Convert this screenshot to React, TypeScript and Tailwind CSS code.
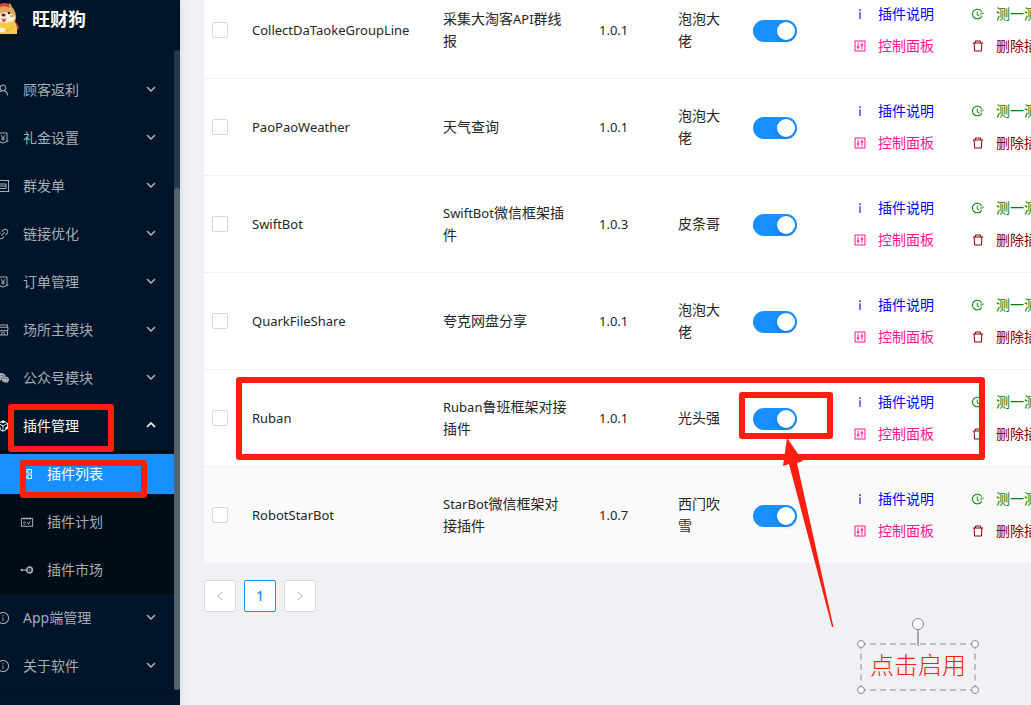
import type { ReactNode } from "react";
import type { IconType } from "react-icons";
import {
  AiFillWechat,
  AiOutlineAppstore,
  AiOutlineCodeSandbox,
  AiOutlineControl,
  AiOutlineDelete,
  AiOutlineFieldTime,
  AiOutlineInfo,
  AiOutlineInfoCircle,
  AiOutlineLeft,
  AiOutlineLink,
  AiOutlineMoneyCollect,
  AiOutlineRight,
  AiOutlineSchedule,
  AiOutlineShop,
  AiOutlineUser,
} from "react-icons/ai";

type MenuEntry = { label: string; icon: ReactNode; open?: boolean };

const topMenu: MenuEntry[] = [
  { label: "顾客返利", icon: <AiOutlineUser size={14} /> },
  { label: "礼金设置", icon: <AiOutlineMoneyCollect size={14} /> },
  { label: "群发单", icon: <GroupIcon /> },
  { label: "链接优化", icon: <AiOutlineLink size={14} /> },
  { label: "订单管理", icon: <AiOutlineMoneyCollect size={14} /> },
  { label: "场所主模块", icon: <AiOutlineShop size={14} /> },
  { label: "公众号模块", icon: <AiFillWechat size={14} /> },
  { label: "插件管理", icon: <AiOutlineCodeSandbox size={14} />, open: true },
];

const bottomMenu: MenuEntry[] = [
  { label: "App端管理", icon: <AiOutlineInfoCircle size={14} /> },
  { label: "关于软件", icon: <AiOutlineInfoCircle size={14} /> },
];

const plugins = [
  { name: "CollectDaTaokeGroupLine", desc: "采集大淘客API群线报", version: "1.0.1", author: "泡泡大佬" },
  { name: "PaoPaoWeather", desc: "天气查询", version: "1.0.1", author: "泡泡大佬" },
  { name: "SwiftBot", desc: "SwiftBot微信框架插件", version: "1.0.3", author: "皮条哥" },
  { name: "QuarkFileShare", desc: "夸克网盘分享", version: "1.0.1", author: "泡泡大佬" },
  { name: "Ruban", desc: "Ruban鲁班框架对接插件", version: "1.0.1", author: "光头强" },
  { name: "RobotStarBot", desc: "StarBot微信框架对接插件", version: "1.0.7", author: "西门吹雪" },
];

function DogLogo() {
  return (
    <svg width="20" height="32" viewBox="0 0 20 32" aria-hidden="true">
      <path d="M0 2Q4 0 8 2L10 0 12 4Q16 8 16 15L15 19 0 20Z" fill="#e0a765" />
      <path d="M0 1Q5-1 9 1L10 5Q5 2 0 4Z" fill="#d8453a" />
      <path d="M0 11Q4 8 7 10Q13 10 15 14Q14 20 8 20L0 20Z" fill="#fdeedd" />
      <circle cx="9" cy="10" r="1.200" fill="#3b2218" />
      <ellipse cx="3.500" cy="12" rx="2.200" ry="1.500" fill="#54302c" />
      <ellipse cx="12" cy="13" rx="2" ry="1.100" fill="#f2903f" />
      <path d="M1 15Q4 17 6 15Q6 20 3 19Z" fill="#d9524a" />
      <path d="M0 19Q5 21 9 19L14 18Q18 21 17 27L17 31H0Z" fill="#f3cb45" />
      <path d="M15 19Q19 21 19 26L17 27Q17 22 15 19Z" fill="#b8403a" />
      <path d="M0 25Q4 24 6 27Q4 30 0 29Z" fill="#fdeedd" />
      <path d="M6 28Q11 28 13 22" fill="none" stroke="#d9a92c" />
    </svg>
  );
}

function GroupIcon() {
  return (
    <svg width="14" height="14" viewBox="0 0 14 14" fill="none" stroke="currentColor" aria-hidden="true">
      <path d="M1 1.500h12.500M1 12.500h12.500M12.500 1.500v11" />
      <path d="M3 5h7v4.500H3M3 7h7" />
    </svg>
  );
}

function Caret({ up = false }: { up?: boolean }) {
  return (
    <svg
      className="mb-[2px]"
      width="10"
      height="6"
      viewBox="0 0 10 6"
      fill="none"
      stroke="currentColor"
      strokeWidth="1.7"
      aria-hidden="true"
    >
      <path d={up ? "M1 5 5 1 9 5" : "M1 1 5 5 9 1"} />
    </svg>
  );
}

function MarketIcon() {
  return (
    <svg width="14" height="14" viewBox="0 0 14 14" fill="none" stroke="currentColor" aria-hidden="true">
      <circle cx="9.500" cy="7" r="2.800" strokeWidth="1.700" />
      <circle cx="9.500" cy="7" r="0.800" fill="currentColor" stroke="none" />
      <path d="M3 7h4" strokeWidth="1.200" />
      <circle cx="1.800" cy="7" r="1.200" fill="currentColor" stroke="none" />
    </svg>
  );
}

function MenuRow({ label, icon, open }: MenuEntry) {
  return (
    <button
      type="button"
      aria-expanded={!!open}
      className={`flex h-12 w-full items-center pr-[18px] text-left ${open ? "text-white" : "text-[#a6adb4]"}`}
    >
      <span className="-ml-1 mr-[13px] shrink-0">{icon}</span>
      <span className="grow">{label}</span>
      <Caret up={open} />
    </button>
  );
}

function SubRow({ label, icon, active }: { label: string; icon: ReactNode; active?: boolean }) {
  return (
    <a
      href="#"
      className={`flex h-10 items-center gap-[13px] pl-5 ${active ? "bg-[#1890ff] text-white" : "text-[#a6adb4]"}`}
    >
      {icon}
      {label}
    </a>
  );
}

function Sidebar() {
  return (
    <aside className="relative w-[180px] shrink-0 bg-[#001529] shadow-[2px_0_6px_rgba(0,21,41,0.08)]">
      <header className="flex h-[66px] items-start gap-3">
        <span className="pt-[3px]">
          <DogLogo />
        </span>
        <h1 className="pt-[5px] text-lg/7 font-bold text-white">旺财狗</h1>
      </header>
      <nav className="mr-[6px]">
        {topMenu.map((m) => (
          <MenuRow key={m.label} {...m} />
        ))}
        <div className="flex flex-col gap-2 bg-[#000c17] py-1">
          <SubRow active label="插件列表" icon={<AiOutlineAppstore size={14} />} />
          <SubRow label="插件计划" icon={<AiOutlineSchedule size={14} />} />
          <SubRow label="插件市场" icon={<MarketIcon />} />
        </div>
        {bottomMenu.map((m) => (
          <MenuRow key={m.label} {...m} />
        ))}
      </nav>
      <div className="mt-1 border-t border-[#000f1f]" />
      <div className="absolute top-[50px] right-0 h-[640px] w-[6px] rounded-full bg-[#263848]">
        <div className="mt-[138px] h-[502px] rounded-full bg-[#56636f]" />
      </div>
    </aside>
  );
}

/* Latin runs sit one size below the Chinese text around them. */
function MixedText({ text }: { text: string }) {
  return (
    <>
      {text.split(/([A-Za-z]+)/).map((part, i) =>
        i % 2 ? (
          <span key={i} className="text-[13px]">
            {part}
          </span>
        ) : (
          part
        ),
      )}
    </>
  );
}

function Action({ icon: Icon, color, children }: { icon: IconType; color: string; children: ReactNode }) {
  return (
    <a href="#" className={`flex h-8 items-center gap-[11px] whitespace-nowrap ${color}`}>
      <Icon size={14} />
      {children}
    </a>
  );
}

function PluginTable() {
  return (
    <table className="w-[911px] table-fixed border-separate border-spacing-0 bg-white text-[#262626] [&_td]:border-t [&_td]:border-[#f0f0f0]">
      <colgroup>
        <col className="w-10" />
        <col className="w-[191px]" />
        <col className="w-[156px]" />
        <col className="w-[79px]" />
        <col className="w-[75px]" />
        <col className="w-[100px]" />
        <col />
      </colgroup>
      <tbody>
        {plugins.map((p, i) => (
          <tr key={p.name} className={`h-[97px] ${i === 5 ? "bg-[#fafafa]" : ""}`}>
            <td className="px-2">
              <input
                type="checkbox"
                aria-label={p.name}
                className="block size-4 appearance-none rounded-[2px] border border-[#d9d9d9] bg-white"
              />
            </td>
            <td className="px-2 text-[13px]">{p.name}</td>
            <td className="pr-6 pl-2">
              <MixedText text={p.desc} />
            </td>
            <td className="px-2 text-[13px]">{p.version}</td>
            <td className="pr-5 pl-2">{p.author}</td>
            <td className="px-2">
              <button
                type="button"
                role="switch"
                aria-checked="true"
                aria-label={`启用 ${p.name}`}
                className="mt-[2px] flex h-[22px] w-11 justify-end rounded-full bg-[#1890ff] p-[2px]"
              >
                <span className="size-[18px] rounded-full bg-white shadow-[0_2px_4px_rgba(0,35,11,0.2)]" />
              </button>
            </td>
            <td className="pl-2">
              <div className="grid grid-cols-[118px_1fr]">
                <Action icon={AiOutlineInfo} color="text-[#0000ff]">插件说明</Action>
                <Action icon={AiOutlineFieldTime} color="text-[#008000]">测一测</Action>
                <Action icon={AiOutlineControl} color="text-[#ff1493]">控制面板</Action>
                <Action icon={AiOutlineDelete} color="text-[#8b0000]">删除插件</Action>
              </div>
            </td>
          </tr>
        ))}
      </tbody>
    </table>
  );
}

function Pagination() {
  const box = "flex size-8 items-center justify-center rounded-[2px] border bg-white";
  return (
    <nav aria-label="分页" className="mt-[17px] flex gap-2">
      <button type="button" disabled aria-label="上一页" className={`${box} border-[#d9d9d9] text-[#bfbfbf]`}>
        <AiOutlineLeft size={12} />
      </button>
      <button type="button" className={`${box} border-[#1890ff] font-medium text-[#1890ff]`}>
        1
      </button>
      <button type="button" disabled aria-label="下一页" className={`${box} border-[#d9d9d9] text-[#bfbfbf]`}>
        <AiOutlineRight size={12} />
      </button>
    </nav>
  );
}

function Annotations() {
  const frame = "absolute rounded-[3px] border-[6px] border-[#ff1e10]";
  const handle = "absolute size-2 rounded-full border border-[#888] bg-white";
  return (
    <div className="pointer-events-none absolute inset-0">
      <div className={`${frame} top-[404px] left-2 h-12 w-[106px]`} />
      <div className={`${frame} top-[460px] left-5 h-[38px] w-[127px]`} />
      <div className={`${frame} top-[377px] left-[236px] h-[83px] w-[749px]`} />
      <div className={`${frame} top-[392px] left-[739px] h-[47px] w-[94px]`} />
      <svg className="absolute top-[438px] left-[782px]" width="54" height="192" viewBox="0 0 54 192" aria-hidden="true">
        <path d="M5 0 21 23 15 25 51.500 189 50 189 7 26 1 28Z" fill="#ff1e10" />
      </svg>
      <div className="absolute top-[643px] left-[860px] flex h-12 w-[116px] items-center justify-center border-2 border-dashed border-[#bfbfc3] pb-[6px] font-['Noto_Sans_CJK_SC',sans-serif] text-2xl font-light text-[#ff1e10]">
        点击启用
        <span className={`${handle} -top-[5px] -left-[5px]`} />
        <span className={`${handle} -top-[5px] -right-[5px]`} />
        <span className={`${handle} -bottom-[5px] -left-[5px]`} />
        <span className={`${handle} -right-[5px] -bottom-[5px]`} />
        <span className="absolute -top-[15px] left-[55px] h-4 w-[2px] bg-[#aaa]" />
        <span className="absolute -top-[27px] left-[50px] size-3 rounded-full border-[1px] border-[#888] bg-white" />
      </div>
    </div>
  );
}

export default function App() {
  return (
    <div className="relative flex h-screen overflow-hidden bg-[#f0f1f5] font-['Noto_Sans','Noto_Sans_CJK_SC',sans-serif] text-sm/[22px]">
      <Sidebar />
      <main className="min-w-0 grow overflow-hidden pl-6">
        <div className="-mt-[19px]">
          <PluginTable />
          <Pagination />
        </div>
      </main>
      <Annotations />
    </div>
  );
}
